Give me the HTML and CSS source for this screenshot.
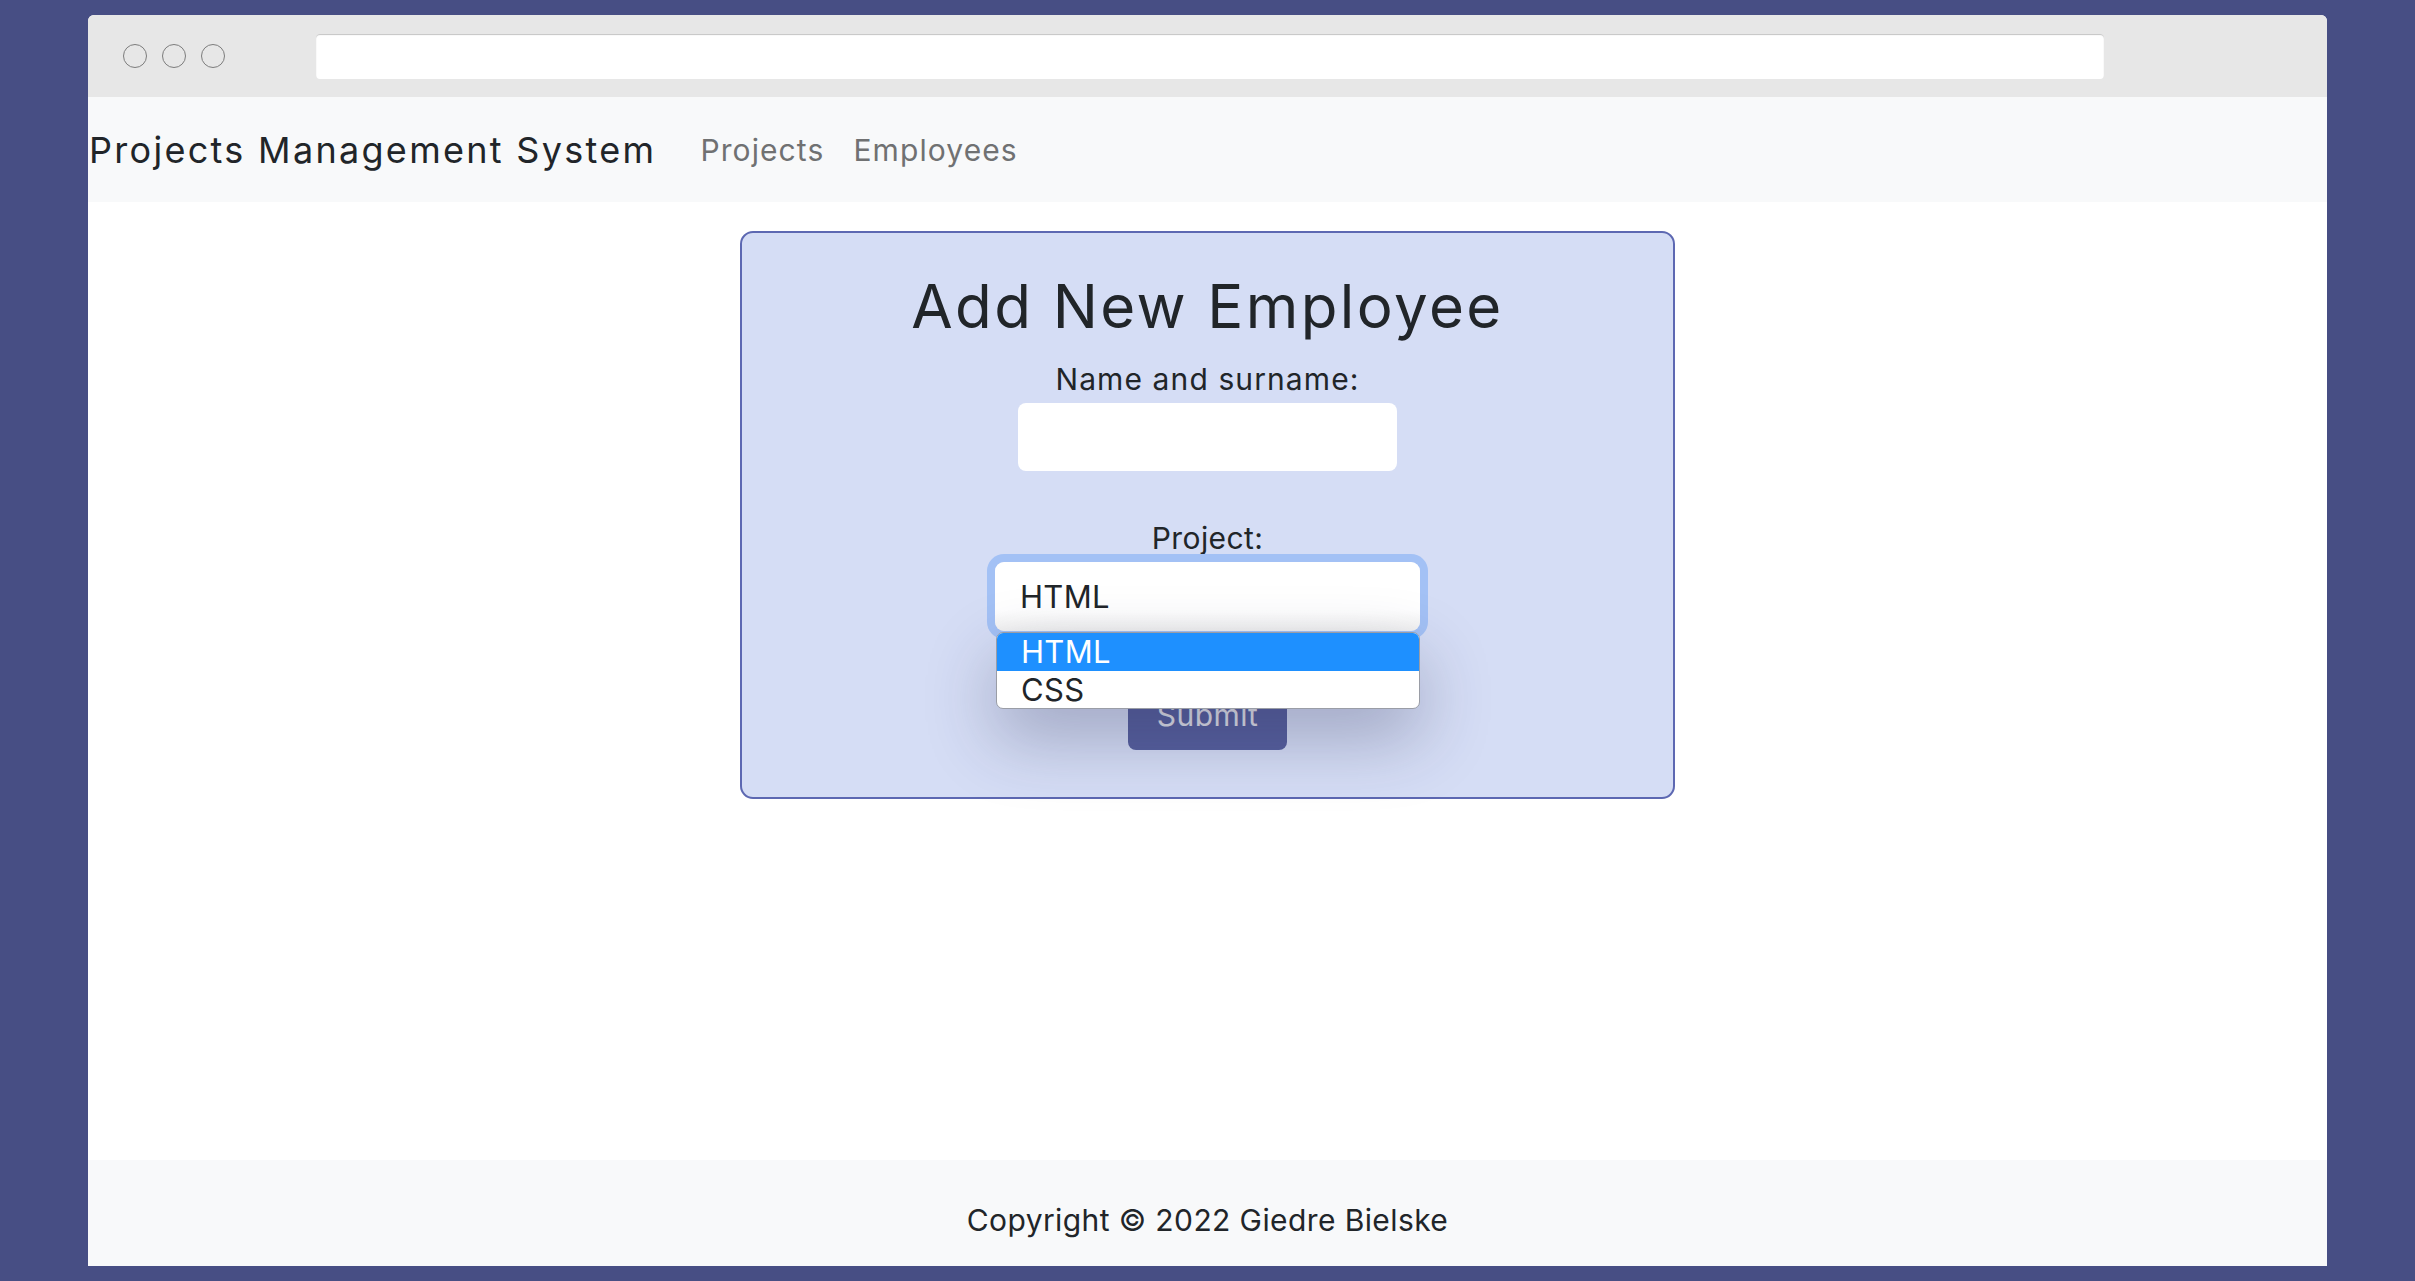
FILE: index.html
```html
<!DOCTYPE html>
<html lang="en">
<head>
<meta charset="utf-8">
<title>Projects Management System</title>
<link rel="stylesheet" href="styles.css">
</head>
<body>
<div class="window">
  <div class="chrome">
    <div class="dots">
      <span class="dot"></span>
      <span class="dot"></span>
      <span class="dot"></span>
    </div>
    <div class="address"></div>
  </div>
  <nav class="navbar">
    <a class="brand" href="#">Projects Management System</a>
    <a class="nav-link" href="#">Projects</a>
    <a class="nav-link" href="#">Employees</a>
  </nav>
  <main class="main">
    <form class="card">
      <h2 class="card-title">Add New Employee</h2>
      <label class="field-label">Name and surname:</label>
      <div class="text-input"></div>
      <label class="field-label project-label">Project:</label>
      <div class="select-wrap">
        <div class="select-box">HTML</div>
        <ul class="dropdown">
          <li class="option selected">HTML</li>
          <li class="option">CSS</li>
        </ul>
      </div>
      <div class="submit">Submit</div>
    </form>
  </main>
  <footer class="footer">
    <span class="copyright">Copyright © 2022 Giedre Bielske</span>
  </footer>
</div>
</body>
</html>
```

FILE: styles.css
```css
* { box-sizing: border-box; }

html, body {
  margin: 0;
  height: 100%;
}

body {
  background: #474e84;
  padding: 15px 88px;
  font-family: "Inter", "Noto Sans", "DejaVu Sans", sans-serif;
  color: #212529;
}

.window {
  height: 1251px;
  background: #ffffff;
  border-radius: 6px 6px 0 0;
  display: flex;
  flex-direction: column;
  overflow: hidden;
}

.chrome {
  height: 82px;
  background: #e7e7e7;
  display: flex;
  align-items: center;
  padding-left: 35px;
  flex-shrink: 0;
}

.dots {
  display: flex;
  gap: 15px;
}

.dot {
  width: 24px;
  height: 24px;
  border: 1.5px solid #7c7c7c;
  border-radius: 50%;
}

.address {
  margin-left: 91px;
  width: 1788px;
  height: 45px;
  background: #ffffff;
  border-radius: 4px;
  box-shadow: inset 0 1px 1px #c4c4c4;
}

.navbar {
  height: 105px;
  background: #f8f9fa;
  display: flex;
  align-items: center;
  padding-left: 1px;
  flex-shrink: 0;
}

.brand {
  font-size: 36px;
  color: #212529;
  text-decoration: none;
  letter-spacing: 2.3px;
  margin-right: 29px;
}

.nav-link {
  font-size: 30px;
  color: #707172;
  text-decoration: none;
  padding: 0 14px 0 15px;
  letter-spacing: 1.1px;
}

.main {
  flex: 1;
  padding-top: 29px;
}

.card {
  width: 935px;
  height: 568px;
  margin: 0 auto;
  background: #d5ddf5;
  border: 2px solid #5d68b2;
  border-radius: 13px;
  display: flex;
  flex-direction: column;
  align-items: center;
  padding-top: 37px;
}

.card-title {
  margin: 0;
  font-size: 60px;
  font-weight: 400;
  line-height: 72px;
  letter-spacing: 2.4px;
}

.field-label {
  display: block;
  margin-top: 15px;
  font-size: 30px;
  line-height: 45px;
  letter-spacing: 1.1px;
}

.text-input {
  margin-top: 1px;
  width: 379px;
  height: 68px;
  background: #ffffff;
  border-radius: 8px;
}

.project-label {
  margin-top: 45px;
  letter-spacing: 0.4px;
}

.select-wrap {
  position: relative;
  margin-top: 1px;
  width: 425px;
}

.select-box {
  height: 69px;
  border-radius: 9px;
  background: linear-gradient(#ffffff 70%, #f1f1f1);
  box-shadow: 0 0 0 8px #a3c1f5;
  font-size: 31px;
  line-height: 69px;
  padding-left: 25px;
  letter-spacing: 0.3px;
}

.dropdown {
  position: absolute;
  top: 70px;
  left: 1px;
  width: 424px;
  margin: 0;
  padding: 0;
  list-style: none;
  background: #ffffff;
  border: 1.5px solid #9a9da6;
  border-radius: 7px;
  overflow: hidden;
  box-shadow: 0 28px 70px rgba(40, 45, 80, 0.32);
  z-index: 2;
}

.option {
  height: 37px;
  line-height: 37px;
  font-size: 31px;
  padding-left: 24px;
  letter-spacing: 0.3px;
  color: #212529;
}

.option.selected {
  height: 38px;
  background: #1e90ff;
  color: #ffffff;
}

.submit {
  margin-top: 50px;
  width: 159px;
  height: 69px;
  background: #565f9e;
  color: #e2e3ea;
  border-radius: 8px;
  font-size: 30px;
  line-height: 69px;
  text-align: center;
  letter-spacing: 0.5px;
}

.footer {
  height: 106px;
  background: #f8f9fa;
  display: flex;
  align-items: center;
  justify-content: center;
  padding-top: 13px;
  flex-shrink: 0;
}

.copyright {
  font-size: 30px;
  letter-spacing: 0.4px;
}
```
